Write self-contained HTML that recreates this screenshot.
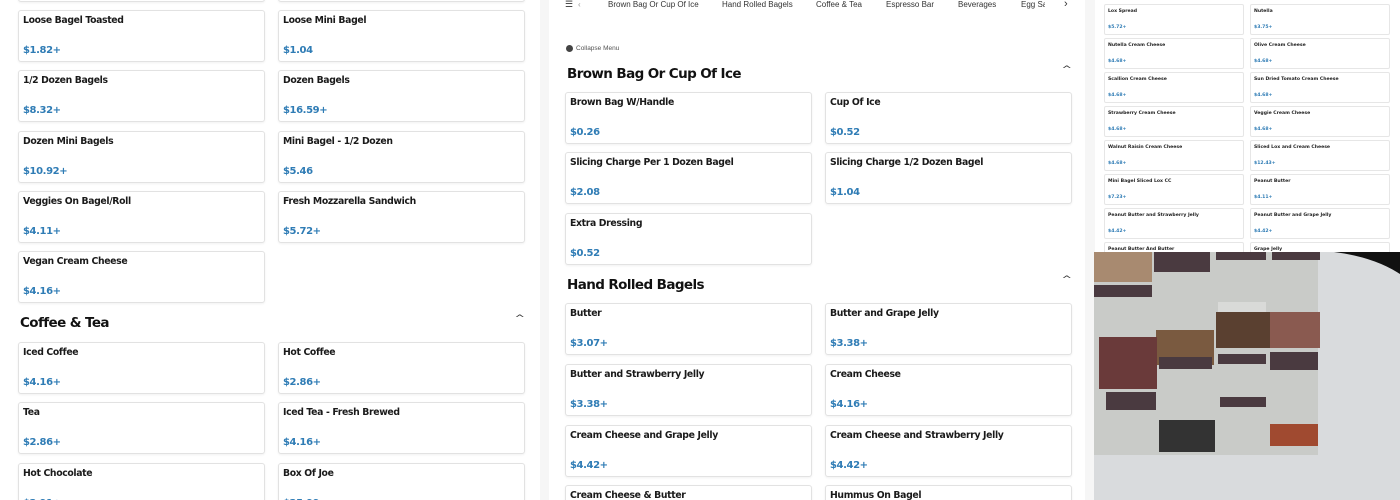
<!DOCTYPE html>
<html><head><meta charset="utf-8"><style>
*{margin:0;padding:0;box-sizing:border-box}
body{width:1400px;height:500px;overflow:hidden;background:#f6f6f6;position:relative;font-family:"DejaVu Sans","Liberation Sans",sans-serif}
.p{position:absolute;background:#fff;overflow:hidden}
.c{position:absolute;width:247px;height:52px;border:1px solid #e2e2e2;border-radius:3px;background:#fff;box-shadow:0 1px 2px rgba(0,0,0,.06)}
.c b{position:absolute;left:4px;top:4px;font-size:9.3px;letter-spacing:-0.35px;font-weight:bold;color:#1a1a1a;white-space:nowrap}
.c i{position:absolute;left:4px;top:34px;font-size:10px;letter-spacing:-0.4px;font-weight:bold;font-style:normal;color:#2f7cb5}
.h{position:absolute;font-size:13.5px;letter-spacing:-0.6px;font-weight:bold;color:#111;white-space:nowrap}
.ch{position:absolute;font-size:9px;color:#333;transform:scaleX(1.4)}
.s{position:absolute;width:140px;height:31px;border:1px solid #e6e6e6;border-radius:2px;background:#fff}
.s b{position:absolute;left:3px;top:4px;font-size:4.6px;font-weight:bold;color:#222;white-space:nowrap}
.s i{position:absolute;left:3px;top:20px;font-size:4.6px;font-weight:bold;font-style:normal;color:#2f7cb5}
.nav{position:absolute;top:0;font-size:8px;color:#333;font-family:"Liberation Sans",sans-serif;white-space:nowrap}
</style></head><body>

<div class="p" style="left:0;top:0;width:540px;height:500px">
<div class="c" style="left:18px;top:-50px"></div><div class="c" style="left:278px;top:-50px"></div>
<div class="c" style="left:18px;top:10px"><b>Loose Bagel Toasted</b><i>$1.82+</i></div>
<div class="c" style="left:278px;top:10px"><b>Loose Mini Bagel</b><i>$1.04</i></div>
<div class="c" style="left:18px;top:70px"><b>1/2 Dozen Bagels</b><i>$8.32+</i></div>
<div class="c" style="left:278px;top:70px"><b>Dozen Bagels</b><i>$16.59+</i></div>
<div class="c" style="left:18px;top:131px"><b>Dozen Mini Bagels</b><i>$10.92+</i></div>
<div class="c" style="left:278px;top:131px"><b>Mini Bagel - 1/2 Dozen</b><i>$5.46</i></div>
<div class="c" style="left:18px;top:191px"><b>Veggies On Bagel/Roll</b><i>$4.11+</i></div>
<div class="c" style="left:278px;top:191px"><b>Fresh Mozzarella Sandwich</b><i>$5.72+</i></div>
<div class="c" style="left:18px;top:251px"><b>Vegan Cream Cheese</b><i>$4.16+</i></div>
<div class="h" style="left:20px;top:315px">Coffee &amp; Tea</div>
<div class="ch" style="left:516px;top:314px">^</div>
<div class="c" style="left:18px;top:342px"><b>Iced Coffee</b><i>$4.16+</i></div>
<div class="c" style="left:278px;top:342px"><b>Hot Coffee</b><i>$2.86+</i></div>
<div class="c" style="left:18px;top:402px"><b>Tea</b><i>$2.86+</i></div>
<div class="c" style="left:278px;top:402px"><b>Iced Tea - Fresh Brewed</b><i>$4.16+</i></div>
<div class="c" style="left:18px;top:463px"><b>Hot Chocolate</b><i>$2.91+</i></div>
<div class="c" style="left:278px;top:463px"><b>Box Of Joe</b><i>$25.99</i></div>
</div>

<div class="p" style="left:549px;top:0;width:536px;height:500px">
<div class="nav" style="left:16px;top:-1px;font-size:9px">&#9776;</div>
<div class="nav" style="left:29px;color:#999">&lsaquo;</div>
<div class="nav" style="left:59px">Brown Bag Or Cup Of Ice</div>
<div class="nav" style="left:173px">Hand Rolled Bagels</div>
<div class="nav" style="left:267px">Coffee &amp; Tea</div>
<div class="nav" style="left:337px">Espresso Bar</div>
<div class="nav" style="left:409px">Beverages</div>
<div class="nav" style="left:472px;width:24px;overflow:hidden">Egg Sandwiches</div>
<div class="nav" style="left:515px;top:-2px;font-size:11px">&rsaquo;</div>
<div style="position:absolute;left:17px;top:45px;width:7px;height:7px;border-radius:50%;background:#444"></div>
<div class="nav" style="left:27px;top:45px;font-size:6.5px;color:#555">Collapse Menu</div>
<div class="h" style="left:18px;top:66px">Brown Bag Or Cup Of Ice</div>
<div class="ch" style="left:514px;top:65px">^</div>
<div class="c" style="left:16px;top:92px"><b>Brown Bag W/Handle</b><i>$0.26</i></div>
<div class="c" style="left:276px;top:92px"><b>Cup Of Ice</b><i>$0.52</i></div>
<div class="c" style="left:16px;top:152px"><b>Slicing Charge Per 1 Dozen Bagel</b><i>$2.08</i></div>
<div class="c" style="left:276px;top:152px"><b>Slicing Charge 1/2 Dozen Bagel</b><i>$1.04</i></div>
<div class="c" style="left:16px;top:213px"><b>Extra Dressing</b><i>$0.52</i></div>
<div class="h" style="left:18px;top:277px">Hand Rolled Bagels</div>
<div class="ch" style="left:514px;top:275px">^</div>
<div class="c" style="left:16px;top:303px"><b>Butter</b><i>$3.07+</i></div>
<div class="c" style="left:276px;top:303px"><b>Butter and Grape Jelly</b><i>$3.38+</i></div>
<div class="c" style="left:16px;top:364px"><b>Butter and Strawberry Jelly</b><i>$3.38+</i></div>
<div class="c" style="left:276px;top:364px"><b>Cream Cheese</b><i>$4.16+</i></div>
<div class="c" style="left:16px;top:425px"><b>Cream Cheese and Grape Jelly</b><i>$4.42+</i></div>
<div class="c" style="left:276px;top:425px"><b>Cream Cheese and Strawberry Jelly</b><i>$4.42+</i></div>
<div class="c" style="left:16px;top:485px"><b>Cream Cheese &amp; Butter</b><i>$3.38+</i></div>
<div class="c" style="left:276px;top:485px"><b>Hummus On Bagel</b><i>$4.42+</i></div>
</div>

<div class="p" style="left:1095px;top:0;width:305px;height:252px">
<div class="s" style="left:9px;top:4px"><b>Lox Spread</b><i>$5.72+</i></div>
<div class="s" style="left:155px;top:4px"><b>Nutella</b><i>$3.75+</i></div>
<div class="s" style="left:9px;top:38px"><b>Nutella Cream Cheese</b><i>$4.68+</i></div>
<div class="s" style="left:155px;top:38px"><b>Olive Cream Cheese</b><i>$4.68+</i></div>
<div class="s" style="left:9px;top:72px"><b>Scallion Cream Cheese</b><i>$4.68+</i></div>
<div class="s" style="left:155px;top:72px"><b>Sun Dried Tomato Cream Cheese</b><i>$4.68+</i></div>
<div class="s" style="left:9px;top:106px"><b>Strawberry Cream Cheese</b><i>$4.68+</i></div>
<div class="s" style="left:155px;top:106px"><b>Veggie Cream Cheese</b><i>$4.68+</i></div>
<div class="s" style="left:9px;top:140px"><b>Walnut Raisin Cream Cheese</b><i>$4.68+</i></div>
<div class="s" style="left:155px;top:140px"><b>Sliced Lox and Cream Cheese</b><i>$12.43+</i></div>
<div class="s" style="left:9px;top:174px"><b>Mini Bagel Sliced Lox CC</b><i>$7.23+</i></div>
<div class="s" style="left:155px;top:174px"><b>Peanut Butter</b><i>$4.11+</i></div>
<div class="s" style="left:9px;top:208px"><b>Peanut Butter and Strawberry Jelly</b><i>$4.42+</i></div>
<div class="s" style="left:155px;top:208px"><b>Peanut Butter and Grape Jelly</b><i>$4.42+</i></div>
<div class="s" style="left:9px;top:242px"><b>Peanut Butter And Butter</b><i>$4.42+</i></div>
<div class="s" style="left:155px;top:242px"><b>Grape Jelly</b><i>$4.42+</i></div>
</div>

<div class="p" style="left:1094px;top:252px;width:306px;height:248px;background:#d9dbdd">
<svg width="306" height="248" style="position:absolute;left:0;top:0">
<path d="M240 0 L306 0 L306 22 Q280 5 240 0Z" fill="#111"/>
<rect x="0" y="0" width="224" height="203" fill="#c9cbc8"/>
<rect x="0" y="0" width="58" height="30" fill="#a88a70"/>
<rect x="0" y="33" width="58" height="12" fill="#4a3a40"/>
<rect x="60" y="0" width="56" height="20" fill="#4a3a40"/>
<rect x="62" y="78" width="58" height="35" fill="#7a5a40"/>
<rect x="122" y="0" width="50" height="8" fill="#4a3a40"/>
<rect x="178" y="0" width="48" height="8" fill="#4a3a40"/>
<rect x="122" y="60" width="54" height="36" fill="#5a4030"/>
<rect x="176" y="60" width="50" height="36" fill="#8a5a50"/>
<rect x="5" y="85" width="58" height="52" fill="#6a3a3a"/>
<rect x="12" y="140" width="50" height="18" fill="#4a3a40"/>
<rect x="65" y="105" width="53" height="12" fill="#4a3a40"/>
<rect x="124" y="50" width="48" height="10" fill="#fff" opacity=".3"/>
<rect x="124" y="102" width="48" height="10" fill="#4a3a40"/>
<rect x="176" y="100" width="48" height="18" fill="#4a3a40"/>
<rect x="126" y="145" width="46" height="10" fill="#4a3a40"/>
<rect x="65" y="168" width="56" height="32" fill="#333"/>
<rect x="176" y="172" width="48" height="22" fill="#a04a30"/>
</svg>
</div>
</body></html>
